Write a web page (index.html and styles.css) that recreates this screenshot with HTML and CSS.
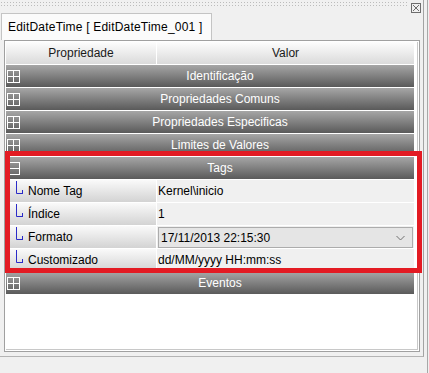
FILE: index.html
```html
<!DOCTYPE html>
<html>
  <head>
    <title>EditDateTime</title>
    <link rel="stylesheet" href="styles.css">
  </head>
  <body>
    <div class="window">
      <div class="frame">
        <div class="topbar">
          <div class="grip"></div>
          <svg class="pin" width="10" height="10" viewBox="0 0 10 10">
            <rect x="0.5" y="0.5" width="9" height="9" fill="none" stroke="#6d6d6d"/>
            <path d="M2 2L8 8M8 2L2 8" stroke="#6d6d6d"/>
          </svg>
        </div>

        <div class="tabs">
          <div class="tab">EditDateTime [ EditDateTime_001 ]</div>
        </div>

        <div class="panel">
          <div class="grid">
            <div class="head">
              <div class="head-cell">Propriedade</div>
              <div class="head-cell">Valor</div>
            </div>

            <div class="group">
              <svg class="toggle" width="13" height="13" viewBox="0 0 13 13">
                <rect x="0.5" y="0.5" width="12" height="12" fill="none" stroke="#fff"/>
                <path d="M1 6.5H12M6.5 1V12" stroke="#fff"/>
              </svg>
              <span class="group-name">Identificação</span>
            </div>
            <div class="group">
              <svg class="toggle" width="13" height="13" viewBox="0 0 13 13">
                <rect x="0.5" y="0.5" width="12" height="12" fill="none" stroke="#fff"/>
                <path d="M1 6.5H12M6.5 1V12" stroke="#fff"/>
              </svg>
              <span class="group-name">Propriedades Comuns</span>
            </div>
            <div class="group">
              <svg class="toggle" width="13" height="13" viewBox="0 0 13 13">
                <rect x="0.5" y="0.5" width="12" height="12" fill="none" stroke="#fff"/>
                <path d="M1 6.5H12M6.5 1V12" stroke="#fff"/>
              </svg>
              <span class="group-name">Propriedades Especificas</span>
            </div>
            <div class="group">
              <svg class="toggle" width="13" height="13" viewBox="0 0 13 13">
                <rect x="0.5" y="0.5" width="12" height="12" fill="none" stroke="#fff"/>
                <path d="M1 6.5H12M6.5 1V12" stroke="#fff"/>
              </svg>
              <span class="group-name">Limites de Valores</span>
            </div>
            <div class="group">
              <svg class="toggle" width="13" height="13" viewBox="0 0 13 13">
                <rect x="0.5" y="0.5" width="12" height="12" fill="none" stroke="#fff"/>
                <path d="M1 6.5H12" stroke="#fff"/>
              </svg>
              <span class="group-name">Tags</span>
            </div>

            <div class="item">
              <div class="prop">
                <svg class="branch" width="8" height="14" viewBox="0 0 8 14">
                  <path d="M1.5 0V12.5H7.5M7.5 9V13" fill="none" stroke="#2b2bc8"/>
                </svg>
                Nome Tag
              </div>
              <div class="val">Kernel\inicio</div>
            </div>
            <div class="item">
              <div class="prop">
                <svg class="branch" width="8" height="14" viewBox="0 0 8 14">
                  <path d="M1.5 0V12.5H7.5M7.5 9V13" fill="none" stroke="#2b2bc8"/>
                </svg>
                Índice
              </div>
              <div class="val">1</div>
            </div>
            <div class="item">
              <div class="prop">
                <svg class="branch" width="8" height="14" viewBox="0 0 8 14">
                  <path d="M1.5 0V12.5H7.5M7.5 9V13" fill="none" stroke="#2b2bc8"/>
                </svg>
                Formato
              </div>
              <div class="val">
                <div class="combo">
                  <span>17/11/2013 22:15:30</span>
                  <svg width="9" height="6" viewBox="0 0 9 6">
                    <path d="M0.5 1L4.5 5L8.5 1" fill="none" stroke="#707070"/>
                  </svg>
                </div>
              </div>
            </div>
            <div class="item">
              <div class="prop">
                <svg class="branch" width="8" height="14" viewBox="0 0 8 14">
                  <path d="M1.5 0V12.5H7.5M7.5 9V13" fill="none" stroke="#2b2bc8"/>
                </svg>
                Customizado
              </div>
              <div class="val">dd/MM/yyyy HH:mm:ss</div>
            </div>

            <div class="group">
              <svg class="toggle" width="13" height="13" viewBox="0 0 13 13">
                <rect x="0.5" y="0.5" width="12" height="12" fill="none" stroke="#fff"/>
                <path d="M1 6.5H12M6.5 1V12" stroke="#fff"/>
              </svg>
              <span class="group-name">Eventos</span>
            </div>
          </div>
        </div>
      </div>
      <div class="edge"></div>

      <!-- red marker drawn over the Tags group -->
      <div class="highlight"></div>
    </div>
  </body>
</html>
```

FILE: styles.css
```css
body {
  margin: 0;
  background-color: #f0f0f0;
  font-family: "Liberation Sans", Arial, sans-serif;
  font-size: 12px;
  color: #000;
}
.window {
  position: relative;
  display: flex;
  width: 429px;
  height: 373px;
}
.frame {
  display: flex;
  flex-direction: column;
  width: 424px;
  height: 357px;
  box-sizing: border-box;
  border-right: 1px solid #a3a3a3;
  border-bottom: 1px solid #b4b4b4;
}
.edge {
  width: 3px;
  border-right: 1px solid #a8a8a8;
}
.topbar {
  display: flex;
  align-items: flex-start;
  height: 13px;
}
.grip {
  flex: 1;
  height: 6px;
  margin-top: 1px;
  margin-right: 3px;
  background-image: radial-gradient(circle, #bcbcbc 0.8px, transparent 1px);
  background-size: 3px 3px;
}
.pin {
  margin-top: 3px;
  margin-right: 2px;
}
.tabs {
  display: flex;
  height: 27px;
}
.tab {
  margin-left: 1px;
  padding: 0 9px 0 6px;
  line-height: 26px;
  background-color: #fbfbfb;
  border: 1px solid #c4c4c4;
  border-bottom: none;
  box-sizing: border-box;
  letter-spacing: 0.2px;
}
.panel {
  width: 416px;
  height: 312px;
  margin-left: 4px;
  box-sizing: border-box;
  border: 1px solid #a0a0a0;
  padding: 1px;
  background-color: #fff;
}
.grid {
  display: flex;
  flex-direction: column;
  gap: 1px;
  height: 100%;
  box-sizing: border-box;
  border-right: 1px solid #c8c8c8;
  border-bottom: 1px solid #c8c8c8;
  padding-right: 3px;
}
.head {
  display: grid;
  grid-template-columns: 150px 1fr;
  gap: 1px;
  height: 22px;
}
.head-cell {
  text-align: center;
  line-height: 22px;
  color: #1a1a1a;
  background: linear-gradient(#fdfdfd, #dadada);
}
.group {
  display: grid;
  grid-template-columns: 20px 1fr;
  align-items: center;
  height: 22px;
  color: #fff;
  background: linear-gradient(#a6a6a6, #5a5a5a);
}
.toggle {
  margin-left: 1px;
}
.group-name {
  text-align: center;
  line-height: 22px;
}
.item {
  display: grid;
  grid-template-columns: 150px 1fr;
  gap: 1px;
  height: 22px;
}
.prop {
  display: flex;
  align-items: center;
  gap: 5px;
  padding-left: 9px;
  background: linear-gradient(#fafafa, #d3d3d3);
}
.branch {
  margin-top: -6px;
}
.val {
  display: flex;
  align-items: center;
  padding-left: 1px;
  background-color: #f0f0f0;
}
.combo {
  display: flex;
  align-items: center;
  justify-content: space-between;
  flex: 1;
  height: 21px;
  margin: 1px 1px 0 0;
  padding: 0 7px 0 2px;
  box-sizing: border-box;
  background-color: #e5e5e5;
  border: 1px solid #acacac;
}
.highlight {
  position: absolute;
  left: 5px;
  top: 151px;
  width: 417px;
  height: 122px;
  box-sizing: border-box;
  border: 5px solid #e31b23;
}
```
